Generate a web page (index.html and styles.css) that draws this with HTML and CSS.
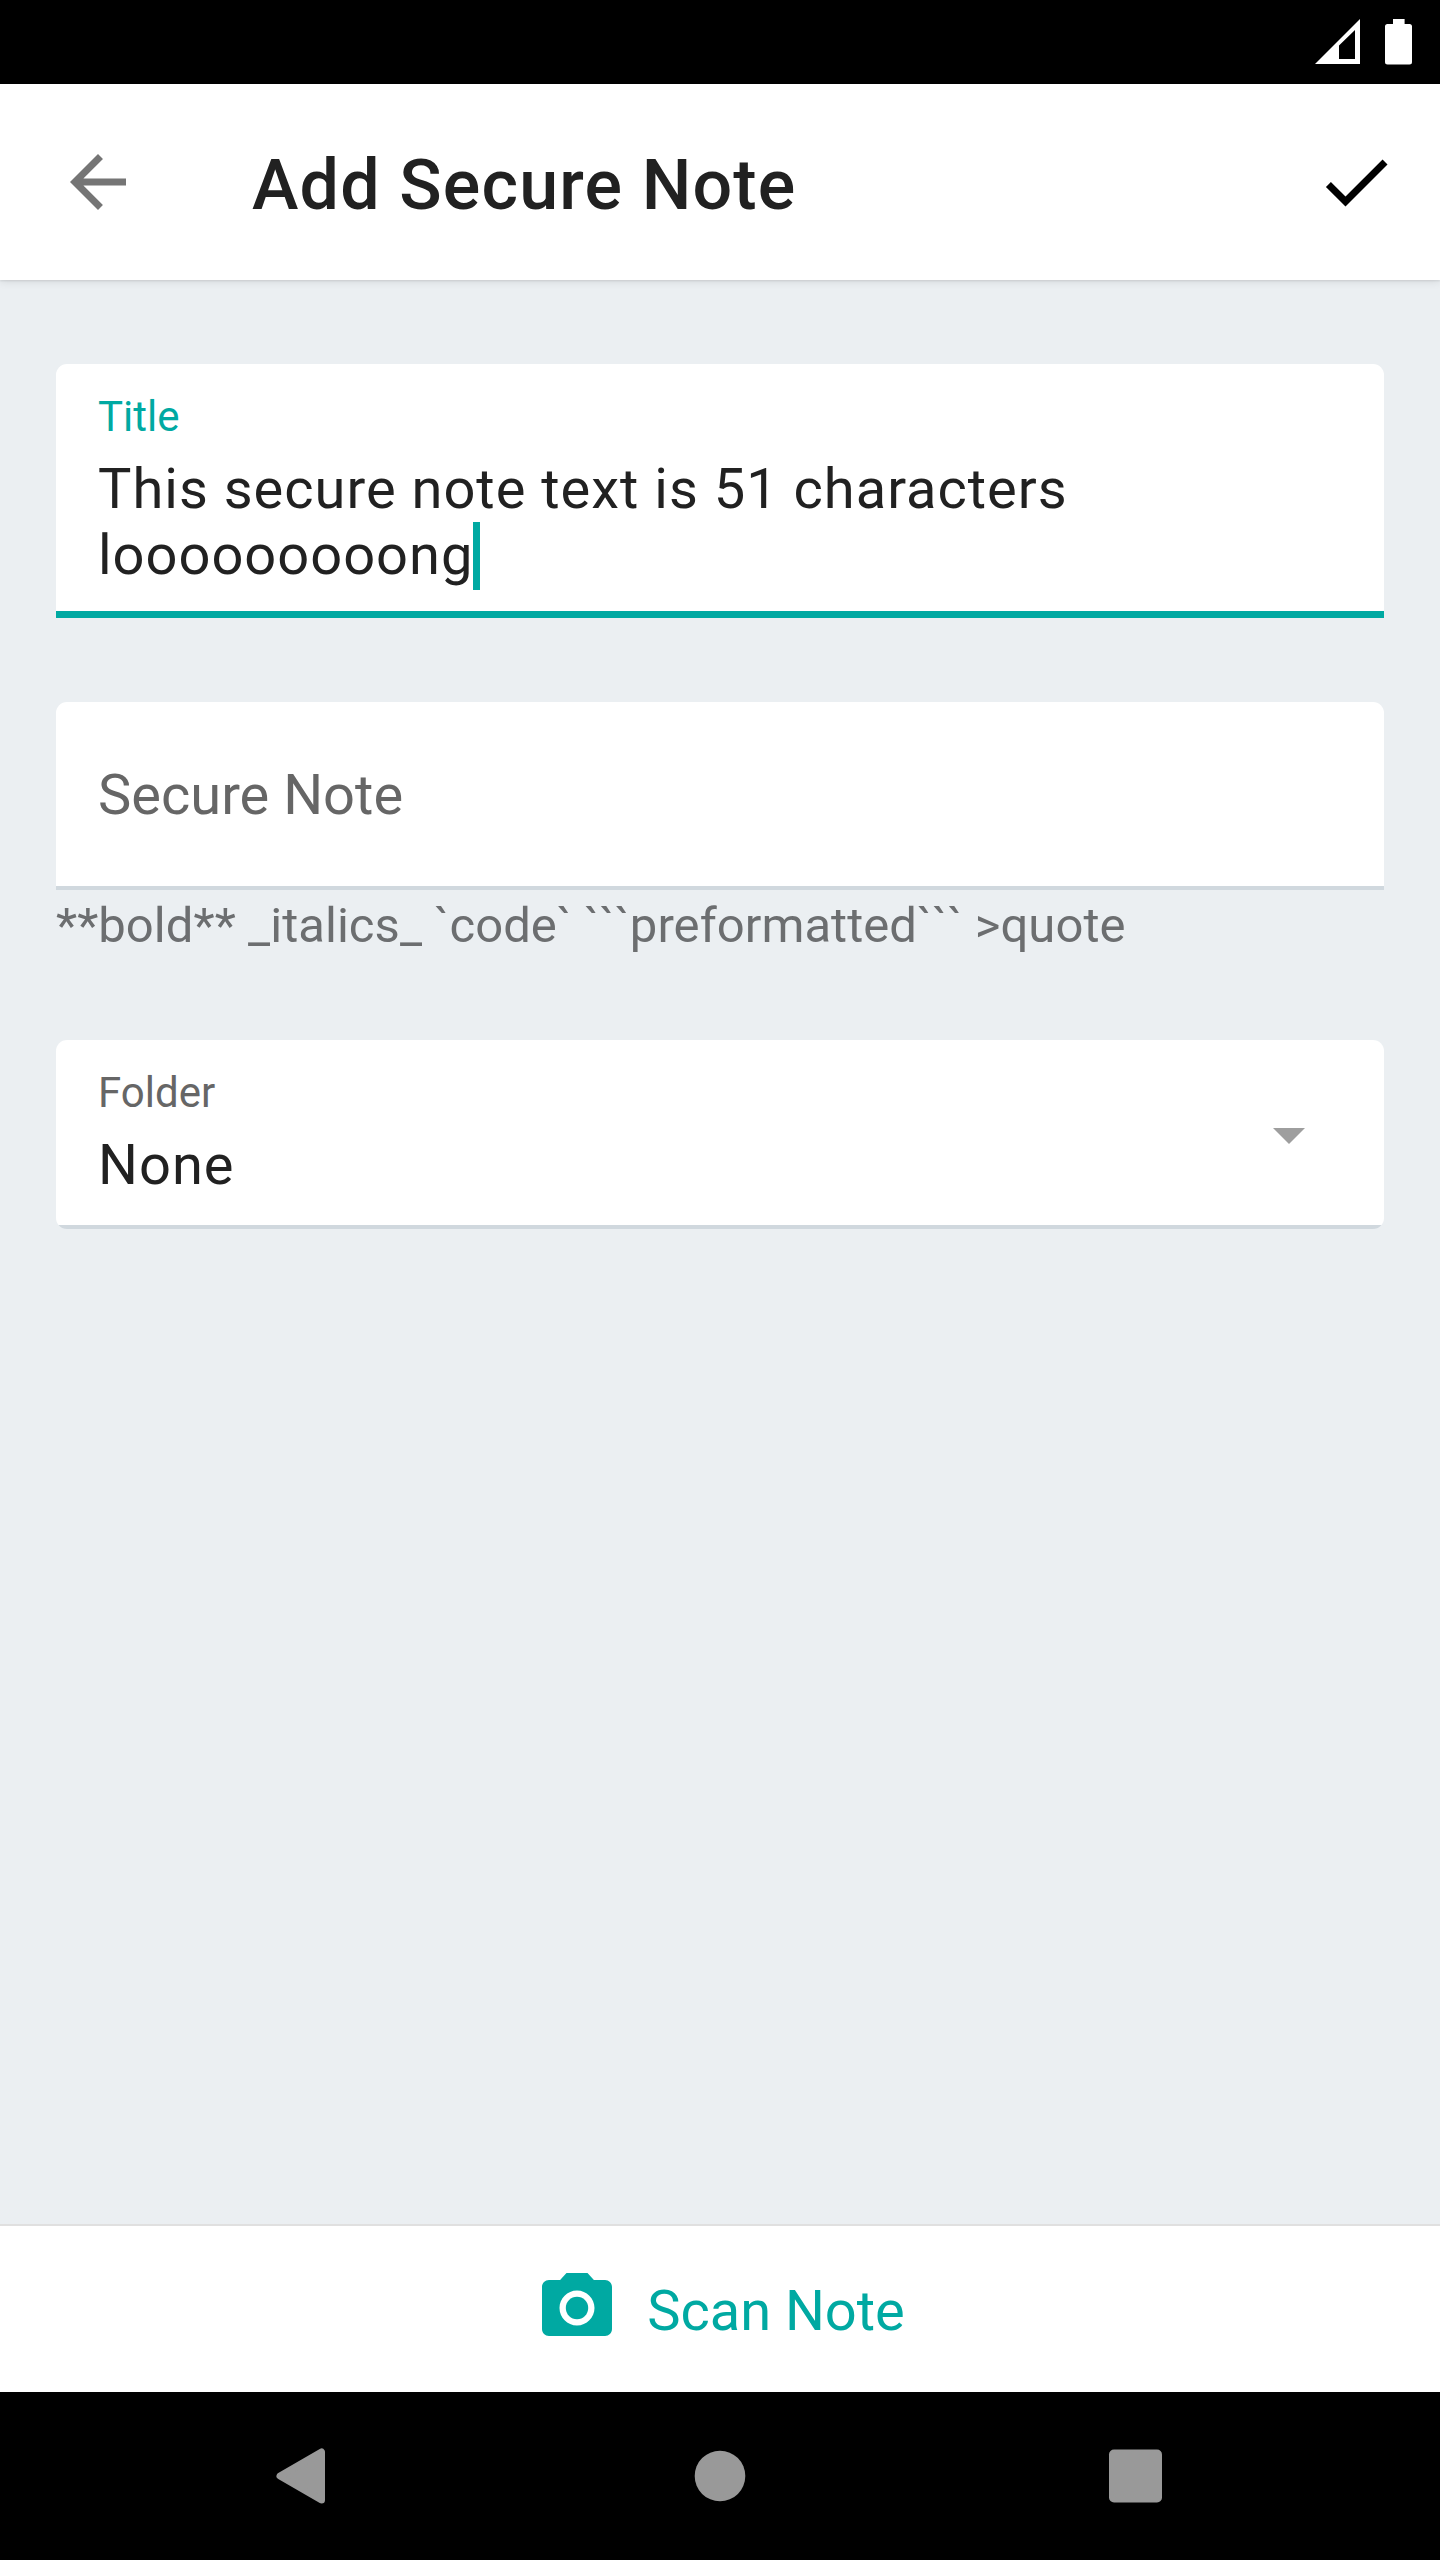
FILE: index.html
```
<!DOCTYPE html>
<html lang="en">
<head>
<meta charset="utf-8">
<title>Add Secure Note</title>
<link rel="stylesheet" href="styles.css">
</head>
<body>
<div class="screen">
  <div class="status-bar">
    <svg class="status-signal" viewBox="0 0 45 45"><path fill-rule="evenodd" d="M0 45L45 0V45ZM24 26.5V40H40V11Z"/></svg>
    <svg class="status-battery" viewBox="0 0 27 46"><path d="M8 0H19.6V5H24.5Q27 5 27 7.500V43Q27 45.500 24.500 45.500H2.500Q0 45.500 0 43V7.500Q0 5 2.500 5H8Z"/></svg>
  </div>

  <header class="toolbar">
    <svg class="icon icon-back" viewBox="0 0 24 24"><path d="M20 11H7.830l5.590-5.590L12 4l-8 8 8 8 1.410-1.410L7.830 13H20v-2z"/></svg>
    <h1 class="toolbar-title">Add Secure Note</h1>
    <svg class="icon icon-done" viewBox="0 0 24 24"><path d="M9 16.170L4.830 12l-1.420 1.410L9 19 21 7l-1.410-1.410z"/></svg>
  </header>

  <main class="form">
    <div class="field field-active">
      <div class="field-label">Title</div>
      <div class="field-value">This secure note text is 51 characters<br>looooooooong<span class="caret"></span></div>
    </div>

    <div class="field field-note">
      <div class="field-placeholder">Secure Note</div>
    </div>
    <div class="hint">**bold** _italics_ `code` ```preformatted``` &gt;quote</div>

    <div class="field field-select">
      <div class="field-text">
        <div class="field-label">Folder</div>
        <div class="field-value">None</div>
      </div>
      <svg class="dropdown-arrow" viewBox="0 0 32 16"><path d="M0 0H32L16 16Z"/></svg>
    </div>
  </main>

  <div class="scan-bar">
    <svg class="icon icon-camera" viewBox="0 0 24 24"><circle cx="12" cy="12" r="3.200"/><path d="M9 2L7.170 4H4c-1.100 0-2 .9-2 2v12c0 1.100.9 2 2 2h16c1.100 0 2-.9 2-2V6c0-1.100-.9-2-2-2h-3.170L15 2H9zm3 15c-2.760 0-5-2.240-5-5s2.240-5 5-5 5 2.240 5 5-2.240 5-5 5z"/></svg>
    <span class="scan-text">Scan Note</span>
  </div>

  <nav class="nav-bar">
    <svg class="nav-icon" viewBox="0 0 98 98"><path class="nav-back" d="M24 49L65.500 25V73Z"/></svg>
    <svg class="nav-icon" viewBox="0 0 98 98"><circle cx="49" cy="49" r="25.300"/></svg>
    <svg class="nav-icon" viewBox="0 0 98 98"><rect x="22" y="22.500" width="53" height="53" rx="5"/></svg>
  </nav>
</div>
</body>
</html>
```
FILE: styles.css
```
* {
  box-sizing: border-box;
}

body {
  margin: 0;
  font-family: Roboto, sans-serif;
  color: #212121;
}

svg {
  display: block;
  flex: none;
}

.screen {
  display: flex;
  flex-direction: column;
  width: 1440px;
  height: 2560px;
  background: #ebeff2;
}

.status-bar {
  display: flex;
  flex: none;
  justify-content: flex-end;
  align-items: flex-start;
  gap: 25px;
  height: 84px;
  padding: 19px 28px 0 0;
  background: #000;
  fill: #fff;
}

.status-signal {
  width: 45px;
  height: 45px;
}

.status-battery {
  width: 27px;
  height: 46px;
}

.toolbar {
  display: flex;
  flex: none;
  align-items: center;
  height: 196px;
  padding: 0 42px 0 56px;
  background: #fff;
  box-shadow: 0 1px 2px rgba(0, 0, 0, 0.09), 0 1px 9px rgba(0, 0, 0, 0.11);
}

.icon {
  width: 84px;
  height: 84px;
}

.icon-back {
  fill: #757575;
}

.icon-done {
  fill: #000;
}

.toolbar-title {
  flex: 1;
  margin: 0 0 0 112px;
  padding-top: 6px;
  font-size: 70px;
  font-weight: 500;
  line-height: 80px;
  letter-spacing: 1.15px;
}

.form {
  flex: 1;
  padding: 84px 56px 0;
}

.field {
  padding: 28px 42px 0;
  border-radius: 11px;
  background: #fff;
}

.field-active {
  height: 254px;
  border-bottom: 7px solid #00a9a2;
  border-radius: 11px 11px 0 0;
}

.field-active .field-label {
  color: #00a9a2;
}

.field-label {
  font-size: 42px;
  line-height: 50px;
  color: #666;
}

.field-value {
  margin-top: 14px;
  font-size: 56px;
  line-height: 66px;
  letter-spacing: 1px;
}

.caret {
  display: inline-block;
  width: 7px;
  height: 68px;
  margin: -2px 0 -2px -0.5px;
  vertical-align: -14px;
  background: #00a9a2;
}

.field-note {
  height: 188px;
  margin-top: 84px;
  padding-top: 60px;
  border-radius: 11px 11px 0 0;
  border-bottom: 4px solid #d0d8de;
}

.field-placeholder {
  font-size: 56px;
  line-height: 66px;
  color: #666;
}

.hint {
  margin-top: 7px;
  font-size: 49px;
  line-height: 58px;
  letter-spacing: 0.05px;
  white-space: nowrap;
  color: #6c6e70;
}

.field-select {
  display: flex;
  justify-content: space-between;
  height: 189px;
  margin-top: 85px;
  padding-right: 79px;
  background: linear-gradient(#fff 185px, #d0d8de 185px);
}

.dropdown-arrow {
  width: 32px;
  height: 16px;
  margin-top: 60px;
  fill: #9e9e9e;
}

.scan-bar {
  display: flex;
  flex: none;
  justify-content: center;
  align-items: center;
  gap: 28px;
  height: 168px;
  border-top: 2px solid #e0e0e0;
  background: #fff;
  color: #00a9a2;
  fill: #00a9a2;
}

.icon-camera {
  margin-bottom: 2px;
}

.scan-text {
  padding-top: 4px;
  font-size: 56px;
  line-height: 66px;
  letter-spacing: -0.05px;
}

.nav-bar {
  display: flex;
  flex: none;
  justify-content: center;
  align-items: center;
  gap: 317.5px;
  height: 168px;
  background: #000;
  fill: #999;
}

.nav-icon {
  width: 98px;
  height: 98px;
}

.nav-back {
  stroke: #999;
  stroke-width: 7px;
  stroke-linejoin: round;
}
```
